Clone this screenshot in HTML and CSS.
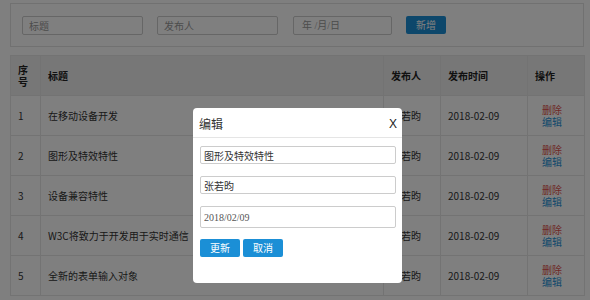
FILE: index.html
```html
<!DOCTYPE html>
<html lang="zh-CN">
<head>
    <meta charset="UTF-8">
    <meta name="viewport" content="width=device-width, initial-scale=1.0">
    <title>文章管理</title>
    <link rel="stylesheet" href="styles.css">
</head>
<body>
    <div class="page">
        <!-- Search / add bar -->
        <div class="search-bar">
            <input class="field field-title" type="text" placeholder="标题">
            <input class="field field-author" type="text" placeholder="发布人">
            <input class="field field-date" type="text" placeholder="年 /月/日">
            <button class="btn">新增</button>
        </div>

        <table class="list">
            <colgroup>
                <col class="c-no">
                <col class="c-title">
                <col class="c-author">
                <col class="c-time">
                <col class="c-op">
            </colgroup>
            <thead>
                <tr>
                    <th>序号</th>
                    <th>标题</th>
                    <th>发布人</th>
                    <th>发布时间</th>
                    <th>操作</th>
                </tr>
            </thead>
            <tbody>
                <tr>
                    <td>1</td>
                    <td>在移动设备开发</td>
                    <td>张若昀</td>
                    <td>2018-02-09</td>
                    <td class="ops"><a class="del" href="#">删除</a><a class="edit" href="#">编辑</a></td>
                </tr>
                <tr>
                    <td>2</td>
                    <td>图形及特效特性</td>
                    <td>张若昀</td>
                    <td>2018-02-09</td>
                    <td class="ops"><a class="del" href="#">删除</a><a class="edit" href="#">编辑</a></td>
                </tr>
                <tr>
                    <td>3</td>
                    <td>设备兼容特性</td>
                    <td>张若昀</td>
                    <td>2018-02-09</td>
                    <td class="ops"><a class="del" href="#">删除</a><a class="edit" href="#">编辑</a></td>
                </tr>
                <tr>
                    <td>4</td>
                    <td>W3C将致力于开发用于实时通信</td>
                    <td>张若昀</td>
                    <td>2018-02-09</td>
                    <td class="ops"><a class="del" href="#">删除</a><a class="edit" href="#">编辑</a></td>
                </tr>
                <tr>
                    <td>5</td>
                    <td>全新的表单输入对象</td>
                    <td>张若昀</td>
                    <td>2018-02-09</td>
                    <td class="ops"><a class="del" href="#">删除</a><a class="edit" href="#">编辑</a></td>
                </tr>
            </tbody>
        </table>
    </div>

    <!-- Edit dialog -->
    <div class="mask">
        <div class="dialog">
            <div class="dialog-head">
                <span class="dialog-title">编辑</span>
                <span class="dialog-close">X</span>
            </div>
            <div class="dialog-body">
                <input class="d-field" type="text" value="图形及特效特性">
                <input class="d-field" type="text" value="张若昀">
                <input class="d-field d-date" type="text" value="2018/02/09">
                <div class="d-actions">
                    <button class="btn">更新</button>
                    <button class="btn">取消</button>
                </div>
            </div>
        </div>
    </div>
</body>
</html>
```

FILE: styles.css
```css
body {
    margin: 0;
    font-family: "Noto Sans CJK SC", "Noto Sans", sans-serif;
    font-size: 10px;
    color: #333;
    background: #fff;
}
.page {
    padding: 3px 6px 0 10px;
}
.search-bar {
    display: flex;
    align-items: flex-start;
    height: 43px;
    padding: 12px 11px 0;
    box-sizing: border-box;
    border: 1px solid #e3e3e3;
    height: 44px;
}
.field {
    box-sizing: border-box;
    height: 19px;
    border: 1px solid #ccc;
    border-radius: 2px;
    padding: 0 6px;
    font-family: inherit;
    font-size: 10px;
    color: #555;
    outline: none;
}
.field::placeholder {
    color: #999;
}
.field-title {
    width: 121px;
}
.field-author {
    width: 121px;
    margin-left: 14px;
}
.field-date {
    width: 99px;
    margin-left: 15px;
    padding-left: 8px;
    font-family: "Liberation Serif", "Noto Sans CJK SC", serif;
}
.btn {
    width: 40px;
    height: 18px;
    padding: 0;
    border: none;
    border-radius: 2px;
    background: #1b8fd6;
    color: #fff;
    font-family: inherit;
    font-size: 10px;
    line-height: 18px;
}
.search-bar .btn {
    margin-left: 14px;
}
.list {
    margin-top: 8px;
    width: 574px;
    border-collapse: collapse;
    table-layout: fixed;
}
.c-no { width: 30px; }
.c-title { width: 343px; }
.c-author { width: 57px; }
.c-time { width: 87px; }
.c-op { width: 57px; }
.list th,
.list td {
    border: 1px solid #e6e6e6;
    height: 39px;
    padding: 0 7px;
    text-align: left;
    vertical-align: middle;
    line-height: 12px;
}
.list th {
    background: #eee;
    font-weight: bold;
    color: #222;
}
.list th:first-child {
    padding-right: 4px;
}
.list td.ops {
    padding-left: 14px;
}
.ops a {
    display: block;
    text-decoration: none;
    line-height: 12px;
}
.ops .del {
    color: #dd514c;
}
.ops .edit {
    color: #1b8fd6;
}
.mask {
    position: fixed;
    inset: 0;
    background: rgba(0, 0, 0, 0.5);
}
.dialog {
    position: absolute;
    left: 193px;
    top: 108px;
    width: 209px;
    height: 175px;
    background: #fff;
    border-radius: 4px;
}
.dialog-head {
    display: flex;
    justify-content: space-between;
    align-items: center;
    height: 27px;
    padding: 2px 5px 0 6px;
    border-bottom: 1px solid #e5e5e5;
}
.dialog-title {
    font-size: 12px;
    color: #333;
}
.dialog-close {
    font-family: "Liberation Sans", Arial, sans-serif;
    font-size: 12px;
    color: #222;
}
.dialog-body {
    padding: 8px 6px 0 7px;
}
.d-field {
    display: block;
    box-sizing: border-box;
    width: 196px;
    height: 18px;
    margin-bottom: 12px;
    padding: 0 3px;
    border: 1px solid #ccc;
    border-radius: 2px;
    font-family: inherit;
    font-size: 10px;
    color: #333;
    outline: none;
}
.d-date {
    height: 22px;
    margin-bottom: 11px;
    font-family: "Liberation Serif", serif;
    color: #555;
}
.d-actions {
    display: flex;
    gap: 3px;
}
```
